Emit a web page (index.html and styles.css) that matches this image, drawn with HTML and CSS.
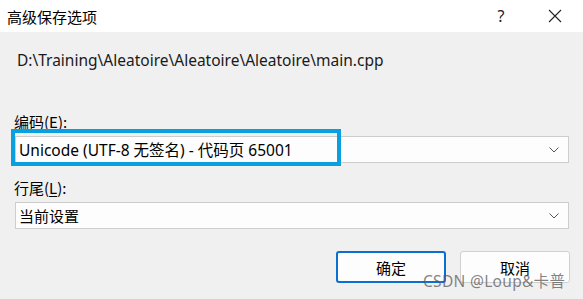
FILE: index.html
```html
<!DOCTYPE html>
<html lang="zh">
<head>
<meta charset="utf-8">
<link rel="stylesheet" href="styles.css">
</head>
<body>
<div class="dialog">
  <div class="titlebar">
    <span class="title">高级保存选项</span>
    <span class="tb-btn help">?</span>
    <span class="tb-btn close">
      <svg width="14" height="14" viewBox="0 0 14 14"><path d="M1 1L13 13M13 1L1 13" stroke="#222" stroke-width="1.1" fill="none"/></svg>
    </span>
  </div>
  <div class="body">
    <div class="path">D:\Training\Aleatoire\Aleatoire\Aleatoire\main.cpp</div>
    <div class="label label-enc">编码(<u>E</u>):</div>
    <div class="field">
      <div class="select">
        <span class="value value-enc">Unicode (UTF-8 无签名) - 代码页 65001</span>
        <svg class="chev" width="10" height="6" viewBox="0 0 10 6"><path d="M0.5 0.5L5 5L9.5 0.5" stroke="#555" stroke-width="1" fill="none"/></svg>
      </div>
      <div class="highlight"></div>
    </div>
    <div class="label label-eol">行尾(<u>L</u>):</div>
    <div class="field">
      <div class="select">
        <span class="value">当前设置</span>
        <svg class="chev" width="10" height="6" viewBox="0 0 10 6"><path d="M0.5 0.5L5 5L9.5 0.5" stroke="#555" stroke-width="1" fill="none"/></svg>
      </div>
    </div>
    <div class="buttons">
      <div class="btn primary">确定</div>
      <div class="btn">取消</div>
    </div>
  </div>
  <div class="watermark">CSDN @Loup&amp;卡普</div>
</div>
</body>
</html>
```
FILE: styles.css
```css
html, body {
  margin: 0;
  padding: 0;
}
body {
  width: 583px;
  height: 299px;
  overflow: hidden;
  background: #f0f0f0;
  font-family: "Noto Sans", "Noto Sans CJK SC", sans-serif;
  color: #000;
}
.dialog {
  position: relative;
  width: 583px;
  height: 299px;
}
.titlebar {
  height: 32px;
  background: #fff;
  display: flex;
  align-items: center;
  font-size: 15px;
}
.title {
  padding-left: 7px;
  flex: 1;
  font-family: "Noto Sans CJK SC", sans-serif;
}
.tb-btn {
  display: flex;
  align-items: center;
  justify-content: center;
}
.help {
  width: 20px;
  font-size: 16px;
  margin-right: 37px;
  color: #222;
}
.close {
  width: 14px;
  margin-right: 21px;
}
.body {
  padding: 0 14px 0 15px;
  display: flex;
  flex-direction: column;
}
.path {
  margin-top: 18px;
  padding-left: 2px;
  font-size: 15.5px;
  line-height: 20px;
  color: #1a1a1a;
}
.label {
  font-size: 15px;
  line-height: 20px;
  font-family: "Noto Sans CJK SC", sans-serif;
  margin-left: -1px;
}
.label u {
  text-underline-offset: 2px;
}
.label-enc {
  margin-top: 42px;
}
.label-eol {
  margin-top: 15px;
}
.field {
  position: relative;
  margin-top: 4px;
}
.select {
  height: 25px;
  border: 1px solid #cdcdcd;
  background: #fdfdfd;
  display: flex;
  align-items: center;
  justify-content: space-between;
  padding: 0 9px 0 3px;
}
.value {
  font-size: 15px;
  font-family: "Noto Sans", "Noto Sans CJK SC", sans-serif;
}
.value-enc {
  font-size: 15.5px;
}
.chev {
  display: block;
}
.highlight {
  position: absolute;
  left: -4px;
  top: -7px;
  width: 322px;
  height: 29px;
  border: 4px solid #0aa0e0;
}
.buttons {
  display: flex;
  justify-content: flex-end;
  gap: 14px;
  margin-top: 22px;
  margin-right: -1px;
}
.btn {
  width: 108px;
  height: 30px;
  border: 1px solid #d0d0d0;
  border-radius: 3px;
  background: #fdfdfd;
  display: flex;
  align-items: center;
  justify-content: center;
  font-size: 15px;
  font-family: "Noto Sans CJK SC", sans-serif;
}
.btn.primary {
  border: 2px solid #0a6fd0;
  width: 106px;
  height: 28px;
}
.watermark {
  position: absolute;
  left: 423px;
  top: 269px;
  font-size: 15.5px;
  color: rgba(90, 90, 90, 0.75);
  font-family: "Noto Sans", "Noto Sans CJK SC", sans-serif;
  letter-spacing: 0.3px;
}
```
